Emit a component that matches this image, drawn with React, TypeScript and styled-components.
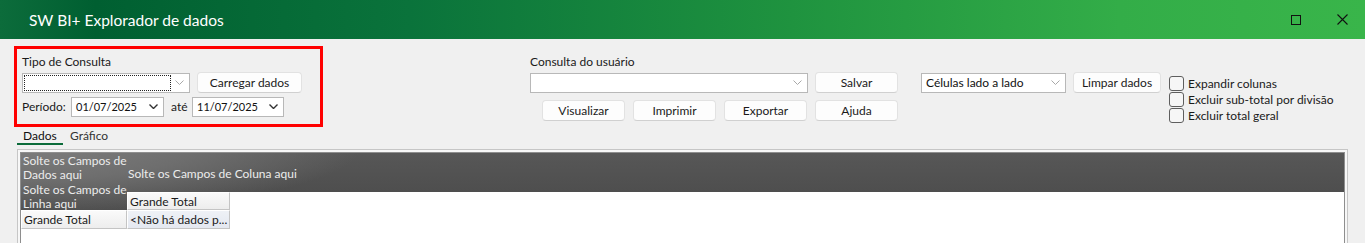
import React from "react";
import styled, { createGlobalStyle } from "styled-components";

const Global = createGlobalStyle`
  html, body { margin: 0; padding: 0; background: #f0f0f0; }
  body { font-family: "Lato", "Noto Sans", sans-serif; font-size: 12px; color: #1a1a1a; overflow: hidden; }
  * { box-sizing: border-box; }
`;

const Window = styled.div`
  width: 1365px;
  height: 243px;
  display: flex;
  flex-direction: column;
  background: #f0f0f0;
  overflow: hidden;
`;

const TitleBar = styled.div`
  height: 39px;
  flex: none;
  display: flex;
  align-items: center;
  padding-left: 29px;
  background: linear-gradient(90deg, #0c6c3b 0%, #005f31 7%, #0a733b 30%, #1f933f 58%, #33ad48 82%, #39b54a 100%);
  color: #ffffff;
`;

const TitleText = styled.span`
  flex: 1;
  font-size: 15.5px;
  padding-top: 1px;
`;

const WinButton = styled.div`
  width: 46px;
  height: 39px;
  display: flex;
  align-items: center;
  justify-content: center;
`;

const Toolbar = styled.div`
  display: flex;
  align-items: flex-start;
  padding: 7px 0 0 14px;
  height: 88px;
  flex: none;
`;

const GroupBox = styled.div`
  width: 309px;
  height: 81px;
  border: 3px solid #ff0000;
  padding: 5px 0 0 5px;
  display: flex;
  flex-direction: column;
  flex: none;
`;

const Label = styled.div`
  height: 16px;
  line-height: 16px;
  white-space: nowrap;
`;

const Row = styled.div<{ $top?: number; $gap?: number; $end?: boolean }>`
  display: flex;
  align-items: center;
  gap: ${(p) => p.$gap ?? 7}px;
  margin-top: ${(p) => p.$top ?? 0}px;
  justify-content: ${(p) => (p.$end ? "flex-end" : "flex-start")};
  height: 21px;
`;

const InlineLabel = styled.span<{ $w: number; $pad?: number }>`
  width: ${(p) => p.$w}px;
  padding-left: ${(p) => p.$pad ?? 0}px;
  flex: none;
  white-space: nowrap;
`;

const Combo = styled.div<{ $w: number }>`
  width: ${(p) => p.$w}px;
  height: 20px;
  flex: none;
  background: #ffffff;
  border: 1px solid #b8b8b8;
  display: flex;
  align-items: center;
  padding: 1px 5px 1px 1px;
`;

const ComboText = styled.div<{ $small?: boolean }>`
  flex: 1;
  padding-left: 3px;
  font-size: ${(p) => (p.$small ? 11 : 12)}px;
  color: #111;
  white-space: nowrap;
`;

const FocusRect = styled.div`
  flex: 1;
  align-self: stretch;
  border: 1px dotted #222;
  margin-right: 4px;
`;

const Button = styled.button<{ $w: number }>`
  width: ${(p) => p.$w}px;
  height: 21px;
  flex: none;
  background: #fdfdfd;
  border: 1px solid #e2e2e2;
  border-bottom-color: #d0d0d0;
  border-radius: 4px;
  font: 12px "Lato", "Noto Sans", sans-serif;
  color: #1a1a1a;
  padding: 0;
  display: flex;
  align-items: center;
  justify-content: center;
`;

const Section = styled.div<{ $left: number; $top: number; $w?: number }>`
  margin-left: ${(p) => p.$left}px;
  margin-top: ${(p) => p.$top}px;
  width: ${(p) => (p.$w ? `${p.$w}px` : "auto")};
  display: flex;
  flex-direction: column;
  flex: none;
`;

const CheckRow = styled.label`
  display: flex;
  align-items: center;
  gap: 4px;
  height: 16px;
  white-space: nowrap;
`;

const CheckBox = styled.span`
  width: 15px;
  height: 15px;
  border: 1px solid #5e5e5e;
  border-radius: 3px;
  background: #f6f6f6;
  flex: none;
`;

const Tabs = styled.div`
  display: flex;
  gap: 7px;
  margin-left: 17px;
  height: 18px;
  flex: none;
`;

const Tab = styled.div<{ $active?: boolean; $w: number }>`
  width: ${(p) => p.$w}px;
  height: 18px;
  line-height: 17px;
  padding-left: ${(p) => (p.$active ? 6 : 0)}px;
  border-bottom: 2px solid ${(p) => (p.$active ? "#0b6b3a" : "transparent")};
  color: ${(p) => (p.$active ? "#111" : "#333")};
`;

const PivotFrame = styled.div`
  margin: 4px 0 0 17px;
  width: 1331px;
  flex: 1;
  border: 1px solid #c6c6c6;
  border-bottom: none;
  padding: 2px 2px 0 2px;
  background: #f7f7f7;
  display: flex;
`;

const PivotInner = styled.div`
  flex: 1;
  background: #ffffff;
  border: 1px solid #8e8e8e;
  border-bottom: none;
  display: grid;
  grid-template-columns: 106px 103px 1fr;
  grid-template-rows: 39px 18px 19px 1fr;
  color: #ececec;
`;

const darkBg = (shift: number) => `
  radial-gradient(ellipse 340px 66px at ${-shift}px -6px, #7e7e7e 0%, #6e6e6e 50%, rgba(86,86,86,0) 100%),
  linear-gradient(180deg, #575757, #4e4e4e)
`;

const DarkLeft = styled.div`
  grid-column: 1;
  grid-row: 1 / span 2;
  background: ${darkBg(0)};
  padding: 1px 0 0 2px;
  line-height: 14px;
  white-space: nowrap;
  overflow: hidden;
`;

const DarkTop = styled.div`
  grid-column: 2 / span 2;
  grid-row: 1;
  background: ${darkBg(106)};
  padding: 14px 0 0 1px;
  line-height: 14px;
  white-space: nowrap;
`;

const DropText = styled.div<{ $gap?: number }>`
  margin-top: ${(p) => p.$gap ?? 0}px;
`;

const HeaderCell = styled.div<{ $col: number; $row: number; $data?: boolean }>`
  grid-column: ${(p) => p.$col};
  grid-row: ${(p) => p.$row};
  background: ${(p) =>
    p.$data ? "linear-gradient(180deg, #eef1f6, #e4e8f0)" : "linear-gradient(180deg, #fafafa, #ededed)"};
  border-top: 1px solid #ffffff;
  border-left: 1px solid #ffffff;
  border-right: 1px solid #c4c4c4;
  border-bottom: 1px solid #c4c4c4;
  color: #1a1a1a;
  display: flex;
  align-items: center;
  padding-left: 2px;
  white-space: nowrap;
  overflow: hidden;
`;

const Maximize = () => (
  <svg width="10" height="10" viewBox="0 0 10 10">
    <rect x="0.5" y="0.5" width="9" height="9" fill="none" stroke="#111" strokeWidth="1" />
  </svg>
);

const Close = () => (
  <svg width="11" height="11" viewBox="0 0 11 11">
    <path d="M0.5 0.5 L10.5 10.5 M10.5 0.5 L0.5 10.5" fill="none" stroke="#111" strokeWidth="1.1" />
  </svg>
);

const Chevron = ({ dark }: { dark?: boolean }) => (
  <svg width="9" height="5" viewBox="0 0 9 5">
    <polyline
      points="0.5,0.5 4.5,4.5 8.5,0.5"
      fill="none"
      stroke={dark ? "#333" : "#a8a8a8"}
      strokeWidth={dark ? 1.4 : 1}
    />
  </svg>
);

export default function App() {
  return (
    <>
      <Global />
      <Window>
        <TitleBar>
          <TitleText>SW BI+ Explorador de dados</TitleText>
          <WinButton>
            <Maximize />
          </WinButton>
          <WinButton>
            <Close />
          </WinButton>
        </TitleBar>

        <Toolbar>
          <GroupBox>
            <Label>Tipo de Consulta</Label>
            <Row $top={2} $gap={7}>
              <Combo $w={168}>
                <FocusRect />
                <Chevron />
              </Combo>
              <Button $w={105}>Carregar dados</Button>
            </Row>
            <Row $top={3} $gap={0}>
              <InlineLabel $w={49}>Período:</InlineLabel>
              <Combo $w={93}>
                <ComboText $small>01/07/2025</ComboText>
                <Chevron dark />
              </Combo>
              <InlineLabel $w={28} $pad={7}>até</InlineLabel>
              <Combo $w={92}>
                <ComboText $small>11/07/2025</ComboText>
                <Chevron dark />
              </Combo>
            </Row>
          </GroupBox>

          <Section $left={207} $top={8} $w={368}>
            <Label>Consulta do usuário</Label>
            <Row $top={2} $gap={7}>
              <Combo $w={278}>
                <ComboText />
                <Chevron />
              </Combo>
              <Button $w={83}>Salvar</Button>
            </Row>
            <Row $top={7} $gap={8} $end>
              <Button $w={83}>Visualizar</Button>
              <Button $w={83}>Imprimir</Button>
              <Button $w={83}>Exportar</Button>
              <Button $w={83}>Ajuda</Button>
            </Row>
          </Section>

          <Section $left={23} $top={26}>
            <Row $gap={7}>
              <Combo $w={145}>
                <ComboText>Células lado a lado</ComboText>
                <Chevron />
              </Combo>
              <Button $w={88}>Limpar dados</Button>
            </Row>
          </Section>

          <Section $left={8} $top={29}>
            <CheckRow>
              <CheckBox />
              Expandir colunas
            </CheckRow>
            <CheckRow>
              <CheckBox />
              Excluir sub-total por divisão
            </CheckRow>
            <CheckRow>
              <CheckBox />
              Excluir total geral
            </CheckRow>
          </Section>
        </Toolbar>

        <Tabs>
          <Tab $active $w={46}>Dados</Tab>
          <Tab $w={60}>Gráfico</Tab>
        </Tabs>

        <PivotFrame>
          <PivotInner>
            <DarkLeft>
              <DropText>
                Solte os Campos de
                <br />
                Dados aqui
              </DropText>
              <DropText $gap={1}>
                Solte os Campos de
                <br />
                Linha aqui
              </DropText>
            </DarkLeft>
            <DarkTop>Solte os Campos de Coluna aqui</DarkTop>
            <HeaderCell $col={2} $row={2}>Grande Total</HeaderCell>
            <HeaderCell $col={1} $row={3}>Grande Total</HeaderCell>
            <HeaderCell $col={2} $row={3} $data>
              &lt;Não há dados p...
            </HeaderCell>
          </PivotInner>
        </PivotFrame>
      </Window>
    </>
  );
}
